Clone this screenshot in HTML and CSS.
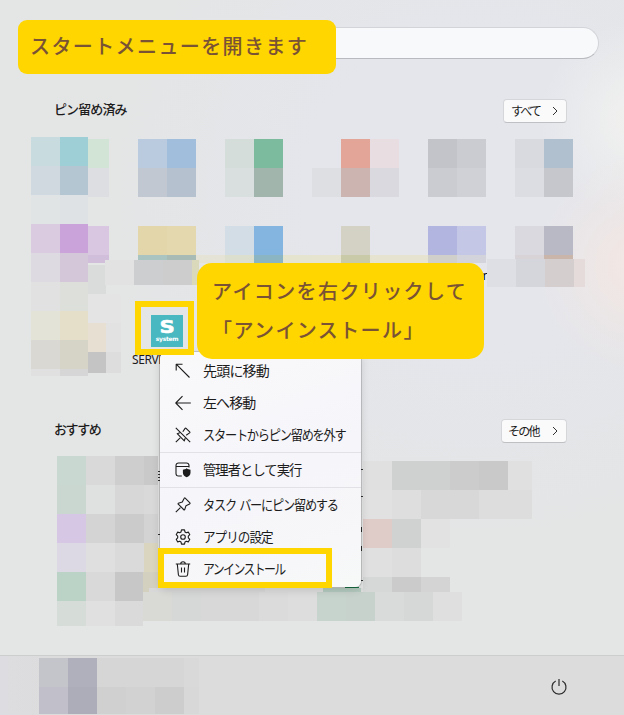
FILE: index.html
```
<!DOCTYPE html>
<html lang="ja">
<head>
  <meta charset="UTF-8">
  <title>スタートメニュー</title>
  <link rel="stylesheet" href="styles.css">
</head>
<body>
  <div class="start">
    <div class="search"></div>

    <div class="section-head">
      <h2 class="pin-title">ピン留め済み</h2>
      <button class="more all"><span>すべて</span>
        <svg width="6" height="10" viewBox="0 0 6 10"><path d="M1 1l4 4-4 4"/></svg>
      </button>
    </div>
    <div class="pinned">
      <svg class="mosaic" width="624" height="287" viewBox="0 123 624 287">
        <rect x="31" y="137" width="29" height="29" fill="#c8dce0"/>
        <rect x="60" y="137" width="28" height="29" fill="#9ecfd6"/>
        <rect x="31" y="166" width="29" height="29" fill="#d0d9df"/>
        <rect x="60" y="166" width="28" height="29" fill="#b3c6d2"/>
        <rect x="31" y="195" width="29" height="29" fill="#e1e4e5"/>
        <rect x="60" y="195" width="28" height="29" fill="#dfe2e4"/>
        <rect x="31" y="224" width="29" height="29" fill="#dbcbe0"/>
        <rect x="60" y="224" width="28" height="29" fill="#c9a3da"/>
        <rect x="31" y="253" width="29" height="29" fill="#dddbe1"/>
        <rect x="60" y="253" width="28" height="29" fill="#d5c7da"/>
        <rect x="31" y="282" width="29" height="29" fill="#e0e1e0"/>
        <rect x="60" y="282" width="28" height="29" fill="#dcdfda"/>
        <rect x="31" y="311" width="29" height="29" fill="#e4e3d8"/>
        <rect x="60" y="311" width="28" height="29" fill="#e5dfca"/>
        <rect x="31" y="340" width="29" height="29" fill="#dad8d2"/>
        <rect x="60" y="340" width="28" height="29" fill="#d6d3c7"/>
        <rect x="31" y="369" width="29" height="7" fill="#e0e0e0"/>
        <rect x="60" y="369" width="28" height="7" fill="#d6d6d6"/>
        <rect x="88" y="139" width="21" height="29" fill="#d2e4d6"/>
        <rect x="88" y="168" width="21" height="29" fill="#dddee2"/>
        <rect x="88" y="226" width="21" height="29" fill="#d9c6e1"/>
        <rect x="88" y="255" width="21" height="5" fill="#d0bedb"/>
        <rect x="88" y="260" width="17" height="3" fill="#d0bedb"/>
        <rect x="88" y="265" width="18" height="29" fill="#dadbdb"/>
        <rect x="88" y="294" width="33" height="29" fill="#e3e4e3"/>
        <rect x="88" y="323" width="18" height="29" fill="#e7e0d2"/>
        <rect x="106" y="323" width="15" height="29" fill="#e2e2e2"/>
        <rect x="88" y="352" width="18" height="21" fill="#c4c4c4"/>
        <rect x="106" y="352" width="15" height="21" fill="#dddddd"/>

        <rect x="138" y="139" width="29" height="29" fill="#bacbe0"/>
        <rect x="167" y="139" width="29" height="29" fill="#a1bedc"/>
        <rect x="138" y="168" width="29" height="29" fill="#c1c8d1"/>
        <rect x="167" y="168" width="29" height="29" fill="#b6c1d0"/>
        <rect x="138" y="226" width="29" height="29" fill="#e3d6ab"/>
        <rect x="167" y="226" width="29" height="29" fill="#e4d8af"/>
        <rect x="138" y="255" width="29" height="5" fill="#aac4c2"/>
        <rect x="167" y="255" width="29" height="5" fill="#a8bbb5"/>
        <rect x="196" y="255" width="29" height="8" fill="#e5e3d5"/>
        <rect x="105" y="260" width="29" height="25" fill="#e2e2e2"/>
        <rect x="134" y="260" width="29" height="25" fill="#ccced0"/>
        <rect x="163" y="260" width="29" height="25" fill="#cccdcc"/>
        <rect x="192" y="260" width="7" height="25" fill="#dbd9bc"/>

        <rect x="225" y="139" width="29" height="29" fill="#d4ddda"/>
        <rect x="254" y="139" width="29" height="29" fill="#7dbb9f"/>
        <rect x="225" y="168" width="29" height="29" fill="#d9dfdf"/>
        <rect x="254" y="168" width="29" height="29" fill="#a1b5ad"/>
        <rect x="225" y="226" width="29" height="29" fill="#d2dde6"/>
        <rect x="254" y="226" width="29" height="29" fill="#84b5e0"/>
        <rect x="225" y="255" width="29" height="8" fill="#dcdfce"/>
        <rect x="254" y="255" width="29" height="8" fill="#8cb5c4"/>
        <rect x="283" y="255" width="29" height="8" fill="#e5e5cf"/>
        <rect x="312" y="255" width="29" height="8" fill="#e6e3cf"/>

        <rect x="341" y="139" width="29" height="29" fill="#e3a597"/>
        <rect x="370" y="139" width="29" height="29" fill="#e8dde1"/>
        <rect x="312" y="168" width="29" height="29" fill="#dddfe3"/>
        <rect x="341" y="168" width="29" height="29" fill="#ccb4b1"/>
        <rect x="370" y="168" width="29" height="29" fill="#dad9df"/>
        <rect x="341" y="226" width="29" height="29" fill="#d4d2c5"/>
        <rect x="341" y="255" width="29" height="8" fill="#c9caa8"/>
        <rect x="370" y="255" width="58" height="8" fill="#e6e3d1"/>

        <rect x="428" y="139" width="29" height="29" fill="#c2c4c9"/>
        <rect x="457" y="139" width="29" height="29" fill="#cbccd1"/>
        <rect x="428" y="168" width="29" height="29" fill="#cbccd1"/>
        <rect x="457" y="168" width="29" height="29" fill="#d0d1d6"/>
        <rect x="428" y="226" width="29" height="29" fill="#b2b5df"/>
        <rect x="457" y="226" width="29" height="29" fill="#c5c7e6"/>
        <rect x="428" y="255" width="29" height="8" fill="#d1cfca"/>
        <rect x="457" y="255" width="29" height="8" fill="#d3d3dc"/>

        <text class="label" x="482.5" y="280">r</text>
        <rect x="515" y="139" width="29" height="29" fill="#d9dae0"/>
        <rect x="544" y="139" width="29" height="29" fill="#b1c0cf"/>
        <rect x="515" y="168" width="29" height="29" fill="#dcdde2"/>
        <rect x="544" y="168" width="29" height="29" fill="#c5c7cc"/>
        <rect x="515" y="226" width="29" height="29" fill="#dad9df"/>
        <rect x="544" y="226" width="29" height="29" fill="#b9b8c5"/>
        <rect x="515" y="255" width="29" height="4" fill="#d8d3d7"/>
        <rect x="544" y="255" width="29" height="4" fill="#cab5ab"/>
        <rect x="487" y="259" width="29" height="28" fill="#dddfe5"/>
        <rect x="516" y="259" width="29" height="28" fill="#d5d6db"/>
        <rect x="545" y="259" width="29" height="28" fill="#d5cecf"/>
        <rect x="574" y="259" width="11" height="28" fill="#e5dbdb"/>
      </svg>
      <div class="app">
        <div class="app-icon"><b>S</b><span>system</span></div>
      </div>
      <div class="app-name">SERVER</div>
    </div>

    <div class="section-head">
      <h2>おすすめ</h2>
      <button class="more"><span>その他</span>
        <svg width="6" height="10" viewBox="0 0 6 10"><path d="M1 1l4 4-4 4"/></svg>
      </button>
    </div>
    <svg class="mosaic" width="624" height="212" viewBox="0 443 624 212">
      <rect x="57" y="456" width="29" height="29" fill="#cad8d2"/>
      <rect x="86" y="456" width="29" height="29" fill="#d9d9d9"/>
      <rect x="115" y="456" width="29" height="29" fill="#cecece"/>
      <rect x="144" y="456" width="14" height="29" fill="#c9c9c9"/>
      <rect x="57" y="485" width="29" height="29" fill="#c9d7d0"/>
      <rect x="86" y="485" width="29" height="29" fill="#dfe0e0"/>
      <rect x="115" y="485" width="29" height="29" fill="#d7d7d7"/>
      <rect x="144" y="485" width="14" height="29" fill="#d9d9d9"/>
      <rect x="57" y="514" width="29" height="29" fill="#d6c8e4"/>
      <rect x="86" y="514" width="29" height="29" fill="#d4d4d4"/>
      <rect x="115" y="514" width="29" height="29" fill="#cbcbcb"/>
      <rect x="144" y="514" width="14" height="29" fill="#d3d3d3"/>
      <rect x="57" y="543" width="29" height="29" fill="#dcd8e4"/>
      <rect x="86" y="543" width="29" height="29" fill="#dfdfdf"/>
      <rect x="115" y="543" width="29" height="29" fill="#dadada"/>
      <rect x="144" y="543" width="14" height="29" fill="#d9d5bf"/>
      <rect x="57" y="572" width="29" height="29" fill="#bbd2c6"/>
      <rect x="86" y="572" width="29" height="29" fill="#d9d9d9"/>
      <rect x="115" y="572" width="28" height="29" fill="#c7c7c7"/>
      <rect x="143" y="572" width="15" height="20" fill="#d3d0bf"/>
      <rect x="57" y="601" width="29" height="25" fill="#d6dcd8"/>
      <rect x="86" y="601" width="29" height="25" fill="#e0e0e0"/>
      <rect x="115" y="601" width="28" height="25" fill="#dadada"/>

      <rect x="149" y="588" width="116" height="4" fill="#d8d8d8"/>
      <rect x="265" y="588" width="58" height="4" fill="#dddddd"/>
      <rect x="323" y="588" width="38" height="4" fill="#b4cabf"/>
      <rect x="361" y="588" width="21" height="4" fill="#dcdfde"/>
      <rect x="143" y="592" width="29" height="29" fill="#d9d9d6"/>
      <rect x="172" y="592" width="29" height="29" fill="#d6d8d7"/>
      <rect x="201" y="592" width="58" height="29" fill="#d8d8d8"/>
      <rect x="259" y="592" width="29" height="29" fill="#dbdbdb"/>
      <rect x="288" y="592" width="29" height="29" fill="#dddddd"/>
      <rect x="317" y="592" width="29" height="29" fill="#c7d3cd"/>
      <rect x="346" y="592" width="29" height="29" fill="#c8d2cd"/>
      <rect x="375" y="592" width="29" height="29" fill="#d8dbda"/>
      <rect x="404" y="592" width="29" height="29" fill="#d6d7d7"/>
      <rect x="433" y="592" width="29" height="29" fill="#dfdfdf"/>

      <rect x="363" y="461" width="29" height="29" fill="#e0e0e0"/>
      <rect x="392" y="461" width="58" height="29" fill="#cfd0d0"/>
      <rect x="450" y="461" width="29" height="29" fill="#cccccc"/>
      <rect x="479" y="461" width="29" height="29" fill="#c9c9c9"/>
      <rect x="508" y="461" width="24" height="29" fill="#e0e0e0"/>
      <rect x="363" y="490" width="29" height="29" fill="#e1e1e1"/>
      <rect x="392" y="490" width="29" height="29" fill="#dedede"/>
      <rect x="421" y="490" width="58" height="29" fill="#d8d8d8"/>
      <rect x="479" y="490" width="53" height="29" fill="#dddddd"/>
      <rect x="363" y="519" width="29" height="29" fill="#dfcbc8"/>
      <rect x="392" y="519" width="29" height="29" fill="#d0d1d1"/>
      <rect x="421" y="519" width="29" height="29" fill="#e2e2e2"/>
      <rect x="363" y="548" width="29" height="29" fill="#e0e0e0"/>
      <rect x="392" y="548" width="29" height="29" fill="#dddddd"/>
      <rect x="363" y="577" width="29" height="15" fill="#d5d8d7"/>
      <rect x="392" y="577" width="29" height="15" fill="#cbcbcb"/>
      <rect x="421" y="577" width="29" height="15" fill="#d4d4d4"/>

      <!-- edges of the items behind the menu -->
      <path fill="#333" d="M158 471h2v1h-2zM158 474h2v1h-2zM158 477h2v1h-2zM158 480h2v1h-2zM158 534h2v1h-2zM361 469h2v1h-2zM361 496h2v1h-2zM361 527h1v5h-1zM361 546h1v5h-1zM361 580h2v1h-2z"/>
      <path fill="#1b7a4b" d="M345 587h14v1h-14z"/>
    </svg>

    <div class="footer">
      <svg class="mosaic" width="160" height="56" viewBox="39 658 160 56">
        <rect x="39" y="658" width="29" height="29" fill="#c4c5ca"/>
        <rect x="68" y="658" width="29" height="29" fill="#b0b0bd"/>
        <rect x="97" y="658" width="87" height="29" fill="#d6d6d6"/>
        <rect x="184" y="658" width="15" height="29" fill="#d9d9d9"/>
        <rect x="39" y="687" width="29" height="27" fill="#c0bfca"/>
        <rect x="68" y="687" width="29" height="27" fill="#adacb9"/>
        <rect x="97" y="687" width="29" height="27" fill="#d0d0d0"/>
        <rect x="126" y="687" width="29" height="27" fill="#d2d2d2"/>
        <rect x="155" y="687" width="29" height="27" fill="#cdcdcd"/>
        <rect x="184" y="687" width="15" height="27" fill="#d8d8d8"/>
      </svg>
      <svg class="power" width="18" height="18" viewBox="0 0 18 18"><path d="M9 1v7M5.7 3a7 7 0 1 0 6.600 0"/></svg>
    </div>
  </div>

  <ul class="menu">
    <li>
      <svg viewBox="0 0 16 16"><path d="M1.200 7.500V1.200h6.300M1.200 1.200l13.300 13.300"/></svg>
      <span class="m1">先頭に移動</span>
    </li>
    <li>
      <svg viewBox="0 0 16 16"><path d="M7.500 1.200L.8 8l6.700 6.800M.8 8h15"/></svg>
      <span class="m2">左へ移動</span>
    </li>
    <li>
      <svg viewBox="0 0 16 16"><path d="M.8.8l14.400 14.400M.8 15.200l4.400-4.400M7.800 4.800l2.300-3.400c.3-.4.700-.4 1-.1l3.600 3.600c.3.300.3.700-.1 1l-3.400 2.300M4.800 5.800l-2.600.9 7.100 7.100.9-2.600"/></svg>
      <span class="m3">スタートからピン留めを外す</span>
    </li>
    <li class="divided">
      <svg viewBox="0 0 16 16"><path d="M6.800 14H3.500A2.500 2.500 0 0 1 1 11.500V3.500A2.500 2.500 0 0 1 3.500 1h8A2.500 2.500 0 0 1 14 3.500v2M1 4.500h13"/><path class="solid" d="M11.700 6.300c1.200 1 2.500 1.300 3.800 1.400v3c0 2.200-1.500 3.700-3.800 4.600-2.300-.9-3.800-2.400-3.800-4.600v-3c1.300-.1 2.600-.4 3.800-1.400z"/></svg>
      <span class="m4">管理者として実行</span>
    </li>
    <li class="divided">
      <svg viewBox="0 0 16 16"><path d="M.8 15.200l4.600-4.600M10.200 1.100l4.700 4.700c.4.400.2.900-.3 1.100L11 8.700l-1.300 4-.6.300-6.100-6.100.3-.6 4-1.300L9.100 1.400c.2-.5.700-.7 1.100-.3z"/></svg>
      <span class="m5">タスク バーにピン留めする</span>
    </li>
    <li>
      <svg viewBox="0 0 16 16"><circle cx="8" cy="8" r="2.300"/><path d="M6.500.9h3l.5 2.100 1.300.7 2-.6 1.500 2.600L13.300 7.200v1.600l1.500 1.500-1.500 2.600-2-.6-1.300.7-.5 2.100h-3L6 13l-1.300-.7-2 .6-1.500-2.600 1.500-1.500V7.200L1.200 5.700l1.500-2.600 2 .6L6 3z"/></svg>
      <span class="m6">アプリの設定</span>
    </li>
    <li>
      <svg viewBox="0 0 16 16"><path d="M.8 3h14.400M5.700 3a2.300 2.300 0 0 1 4.600 0M2.300 3l1.100 10.700a1.700 1.700 0 0 0 1.700 1.500h5.800a1.700 1.700 0 0 0 1.700-1.500L13.700 3M6.500 6.500v5M9.500 6.500v5"/></svg>
      <span class="m7">アンインストール</span>
    </li>
  </ul>

  <div class="frame frame-icon"></div>
  <div class="frame frame-item"></div>
  <div class="callout callout-open">スタートメニューを開きます</div>
  <div class="callout callout-click">アイコンを右クリックして<br>「アンインストール」</div>
</body>
</html>
```
FILE: styles.css
```
body {
  margin: 0;
  position: relative;
  width: 624px;
  height: 715px;
  overflow: hidden;
  font-family: "Noto Sans CJK JP", sans-serif;
  color: #1c1c1c;
}
.start {
  display: flex;
  flex-direction: column;
  height: 715px;
  background:
    radial-gradient(circle at 640px 265px, #f4e7e2 0, rgba(244, 231, 226, 0) 110px),
    radial-gradient(circle at 640px 120px, #f2f2ef 0, rgba(242, 242, 239, 0) 100px),
    radial-gradient(ellipse 370px 350px at 480px 190px, #e4e6ec 40%, rgba(228, 230, 236, 0) 100%),
    #e4e5e5;
}
.search {
  box-sizing: border-box;
  flex: none;
  height: 32px;
  margin: 27px 25px 39px;
  border: 1px solid #d3d4d9;
  border-bottom-color: #b9babf;
  border-radius: 16px;
  background: #f8f9fb;
}
.section-head {
  display: flex;
  justify-content: space-between;
  align-items: center;
  height: 25px;
  padding: 0 57px 0 54px;
}
h2 {
  margin: 0;
  padding-bottom: 3px;
  font-size: 13px;
  font-weight: 500;
  line-height: 22px;
  letter-spacing: -1.4px;
}
.pin-title {
  padding-bottom: 4px;
  line-height: 21px;
  letter-spacing: -0.9px;
}
.more {
  display: flex;
  justify-content: space-between;
  align-items: center;
  box-sizing: border-box;
  width: 66px;
  height: 24px;
  padding: 0 8px 0 6px;
  border: 1px solid #d5d6da;
  border-bottom-color: #bfc0c4;
  border-radius: 4px;
  background: #fafafb;
  font-family: inherit;
  font-size: 12px;
  letter-spacing: -1.8px;
  color: #1c1c1c;
}
.all {
  width: 64px;
  padding-left: 7px;
}
.more svg {
  fill: none;
  stroke: #333;
}
.mosaic {
  display: block;
  flex: none;
  shape-rendering: crispEdges;
}
.label {
  font-size: 12px;
}
.pinned {
  position: relative;
  height: 295px;
}
.app {
  position: absolute;
  left: 151px;
  top: 192px;
}
.app-icon {
  display: flex;
  flex-direction: column;
  align-items: center;
  width: 32px;
  height: 32px;
  background: #4ab8c1;
  color: #fff;
  font-family: "DejaVu Sans", sans-serif;
}
.app-icon b {
  height: 20px;
  font-size: 17px;
  line-height: 25px;
  transform: scaleX(1.25);
  -webkit-text-stroke: 0.5px #fff;
}
.app-icon span {
  font-size: 6px;
  font-weight: bold;
  line-height: 7px;
  letter-spacing: -0.3px;
}
.app-name {
  position: absolute;
  left: 132px;
  top: 228px;
  font-family: "Noto Sans", sans-serif;
  font-size: 12px;
  line-height: 17px;
  letter-spacing: -0.4px;
}
.footer {
  display: flex;
  justify-content: space-between;
  align-items: center;
  box-sizing: border-box;
  height: 60px;
  margin-top: auto;
  padding: 0 56px 0 39px;
  border-top: 1px solid #cccdcd;
  background: linear-gradient(90deg, #dddce0, #dcdcdc 60px);
}
.power {
  margin-top: 3px;
  fill: none;
  stroke: #2b2b2b;
  stroke-width: 1.2;
}
.menu {
  position: absolute;
  left: 160px;
  top: 352px;
  box-sizing: border-box;
  width: 201px;
  height: 235px;
  margin: 0;
  padding: 3px 0 0;
  list-style: none;
  border-radius: 6px;
  background: linear-gradient(160deg, #f9f9fa, #f6f5fa 50%, #f7f8f8);
  box-shadow: 0 0 0 1px rgba(0, 0, 0, 0.14), 0 3px 9px rgba(0, 0, 0, 0.14);
}
.menu li {
  display: flex;
  align-items: center;
  gap: 12px;
  height: 32px;
  padding-left: 15px;
  font-size: 14px;
  line-height: 30px;
  white-space: nowrap;
}
.menu .divided {
  border-top: 1px solid #e2e1e5;
  padding-top: 1px;
  margin-top: 1px;
}
.menu svg {
  flex: none;
  width: 16px;
  height: 16px;
  fill: none;
  stroke: #1c1c1c;
  stroke-width: 1.1;
  stroke-linejoin: round;
}
.menu .solid {
  fill: #1c1c1c;
  stroke: none;
}
/* narrow kana, as in a UI font */
.menu span {
  height: 32px;
  transform-origin: 0 50%;
}
.m1 { letter-spacing: -0.8px; }
.m2 { letter-spacing: -0.9px; }
.m3 { letter-spacing: -1.4px; transform: scaleX(0.87); }
.m4 { letter-spacing: -1px; transform: scaleX(0.95); }
.m5 { letter-spacing: -1.4px; word-spacing: 2px; transform: scaleX(0.87); }
.m6 { letter-spacing: -1.1px; transform: scaleX(0.9); }
.m7 { letter-spacing: -1.9px; transform: scaleX(0.85); }
.frame {
  position: absolute;
  box-sizing: border-box;
  border: 6px solid #ffd600;
}
.frame-icon {
  left: 135px;
  top: 301px;
  width: 59px;
  height: 54px;
}
.frame-item {
  left: 158px;
  top: 548px;
  width: 174px;
  height: 40px;
}
.callout {
  position: absolute;
  box-sizing: border-box;
  background: #ffd600;
  color: #7a5335;
  font-size: 20px;
  font-weight: 500;
  letter-spacing: 1.4px;
  white-space: nowrap;
}
.callout-open {
  left: 18px;
  top: 20px;
  width: 318px;
  height: 54px;
  padding-left: 12px;
  border-radius: 9px;
  line-height: 52px;
}
.callout-click {
  left: 197px;
  top: 263px;
  width: 287px;
  height: 96px;
  padding: 8px 0 0 15px;
  border-radius: 15px;
  line-height: 39px;
}
```
